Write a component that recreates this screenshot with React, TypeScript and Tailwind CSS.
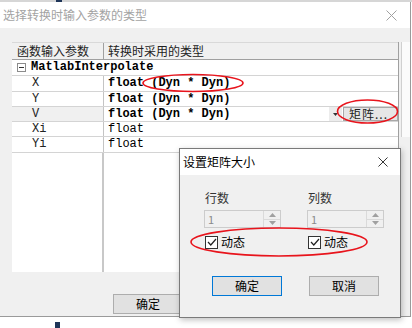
import React from 'react';

// shared font stacks
const cjk = "font-['Microsoft_YaHei','Noto_Sans_CJK_SC',sans-serif]";
const mono = "font-['Liberation_Mono','Noto_Sans_CJK_SC',monospace]";

type Row = { name: string; type: string; bold: boolean; h: string; combo?: boolean };

const ROWS: Row[] = [
  { name: 'X', type: 'float (Dyn * Dyn)', bold: true, h: 'h-[16px]' },
  { name: 'Y', type: 'float (Dyn * Dyn)', bold: true, h: 'h-[15px]' },
  { name: 'V', type: 'float (Dyn * Dyn)', bold: true, h: 'h-[15px]', combo: true },
  { name: 'Xi', type: 'float', bold: false, h: 'h-[15px]' },
  { name: 'Yi', type: 'float', bold: false, h: 'h-[16px]' },
];

const CloseX: React.FC<{ color: string; size?: number }> = ({ color, size = 11 }) => (
  <svg width={size} height={size} viewBox="0 0 11 11">
    <path d="M0.5 0.5 L10.5 10.5 M10.5 0.5 L0.5 10.5" stroke={color} strokeWidth="1" fill="none" />
  </svg>
);

const SpinBox: React.FC = () => (
  <div className="flex h-[18px] w-[77px] border border-[#cccccc] bg-[#f0f0f0]">
    <div className={`flex-1 pl-[3px] text-[11px] leading-[16px] text-[#8a8a8a] ${cjk}`}>1</div>
    <div className="flex w-[17px] flex-col border-l border-[#dadada]">
      <div className="flex flex-1 items-center justify-center border-b border-[#dadada]">
        <svg width="7" height="4" viewBox="0 0 7 4"><path d="M0 4 L3.5 0 L7 4 Z" fill="#a0a0a0" /></svg>
      </div>
      <div className="flex flex-1 items-center justify-center">
        <svg width="7" height="4" viewBox="0 0 7 4"><path d="M0 0 L3.5 4 L7 0 Z" fill="#a0a0a0" /></svg>
      </div>
    </div>
  </div>
);

const Check: React.FC<{ label: string }> = ({ label }) => (
  <div className="flex items-center gap-[3px]">
    <div className="flex h-[13px] w-[13px] items-center justify-center border border-[#333333] bg-white">
      <svg width="10" height="8" viewBox="0 0 10 8">
        <path d="M1 4 L3.8 7 L9 1" stroke="#222222" strokeWidth="1.2" fill="none" />
      </svg>
    </div>
    <span className={`text-[12px] leading-[14px] text-black ${cjk}`}>{label}</span>
  </div>
);

const MatrixDialog: React.FC = () => (
  <div className="absolute left-[179px] top-[148px] flex h-[170px] w-[222px] flex-col border border-[#7a7a7a] bg-[#f0f0f0] shadow-[1px_2px_6px_rgba(0,0,0,0.25)]">
    <div className="flex h-[26px] items-center justify-between bg-white pl-[3px] pr-[12px]">
      <span className={`text-[12px] text-black ${cjk}`}>设置矩阵大小</span>
      <CloseX color="#222222" size={10} />
    </div>
    <div className="flex flex-col pl-[24px] pt-[16px]">
      <div className="flex gap-[26px]">
        {['行数', '列数'].map((t) => (
          <div key={t} className="flex w-[77px] flex-col">
            <span className={`pl-[1px] text-[12px] leading-[14px] text-[#333333] ${cjk}`}>{t}</span>
            <div className="mt-[5px]">
              <SpinBox />
            </div>
            <div className="mt-[7px] pl-[1px]">
              <Check label="动态" />
            </div>
          </div>
        ))}
      </div>
      <div className="mt-[27px] flex gap-[27px] pl-[8px]">
        <button className={`h-[20px] w-[70px] border border-[#0078d7] bg-[#e1e1e1] text-[12px] text-black ${cjk}`}>确定</button>
        <button className={`h-[20px] w-[70px] border border-[#adadad] bg-[#e1e1e1] text-[12px] text-black ${cjk}`}>取消</button>
      </div>
    </div>
  </div>
);

const Annotations: React.FC = () => (
  <svg className="pointer-events-none absolute left-0 top-0" width="412" height="328" viewBox="0 0 412 328">
    <g stroke="#e8141c" strokeWidth="1.6" fill="none">
      <ellipse cx="193" cy="83" rx="50" ry="8.5" />
      <ellipse cx="367.5" cy="111.5" rx="30" ry="11.5" />
      <ellipse cx="279" cy="242" rx="88" ry="14" />
    </g>
  </svg>
);

const App: React.FC = () => {
  return (
    <div className="relative flex h-[328px] w-[412px] flex-col overflow-hidden bg-white">
      {/* strip of what lies behind the window */}
      <div className="flex h-[2px] bg-[#d6d6d6]">
        <div className="ml-[56px] w-[6px] bg-[#1e3558]" />
      </div>

      {/* main window */}
      <div className="flex h-[315px] w-[411px] flex-col border-r border-b border-[#9a9a9a]">
        <div className="flex h-[26px] items-center justify-between bg-white pl-[3px] pr-[13px]">
          <span className={`text-[12px] text-[#a3a3a3] ${cjk}`}>选择转换时输入参数的类型</span>
          <CloseX color="#a0a0a0" />
        </div>

        <div className="flex flex-1 flex-col bg-[#f0f0f0] pl-[12px] pt-[14px]">
          <div className="flex">
            {/* property grid */}
            <div className="flex h-[230px] w-[387px] flex-col border-r border-[#a0a0a0] bg-white">
              <div className={`flex h-[18px] border-t border-b border-t-[#d9d9d9] border-b-[#a0a0a0] bg-[#f0f0f0] text-[12px] leading-[16px] text-[#222222] ${cjk}`}>
                <div className="w-[92px] border-r border-[#a0a0a0] pl-[5px]">函数输入参数</div>
                <div className="flex-1 pl-[4px]">转换时采用的类型</div>
              </div>

              <div className="flex h-[16px] items-center border-b border-[#d4d4d4] pl-[5px]">
                <div className="flex h-[9px] w-[9px] items-center justify-center border border-[#8c8c8c] bg-white">
                  <div className="h-px w-[5px] bg-[#333333]" />
                </div>
                <span className={`ml-[5px] text-[12px] font-bold leading-[15px] text-black ${mono}`}>MatlabInterpolate</span>
              </div>

              {ROWS.map((r) => (
                <div key={r.name} className={`flex ${r.h} border-b border-[#d4d4d4]`}>
                  <div
                    className={`w-[92px] border-r border-[#c4c4c4] pl-[20px] text-[12px] leading-[14px] text-[#222222] ${mono} ${
                      r.combo ? 'bg-[#f0f0f0]' : 'bg-white'
                    }`}
                  >
                    {r.name}
                  </div>
                  <div className="flex flex-1 items-stretch">
                    <span
                      className={`flex-1 pl-[4px] text-[12px] leading-[14px] text-black ${mono} ${
                        r.bold ? 'font-bold' : 'font-normal'
                      }`}
                    >
                      {r.type}
                    </span>
                    {r.combo && (
                      <>
                        <div className="flex w-[13px] items-center justify-center bg-[#ececec]">
                          <svg width="5" height="3" viewBox="0 0 5 3"><path d="M0 0 L2.5 3 L5 0 Z" fill="#333333" /></svg>
                        </div>
                        <div className={`ml-[1px] flex w-[55px] items-center border border-[#a8a8a8] bg-[#e6e6e6] pl-[5px] text-[12px] tracking-[1px] text-[#222222] ${cjk}`}>
                          矩阵...
                        </div>
                      </>
                    )}
                  </div>
                </div>
              ))}

              <div className="flex flex-1">
                <div className="w-[92px] border-r-2 border-[#c8c8c8]" />
                <div className="flex-1" />
              </div>
            </div>
            <div className="ml-[2px] h-[95px] w-[9px] border-l border-[#d0d0d0] bg-[#fbfbfb]" />
          </div>

          <div className="mt-[19px] pl-[101px]">
            <button className={`h-[20px] w-[70px] border border-[#adadad] bg-[#e1e1e1] text-[12px] text-black ${cjk}`}>确定</button>
          </div>
        </div>
      </div>

      <div className="mt-[5px] flex flex-1">
        <div className="ml-[55px] w-[5px] bg-[#1e3558]" />
      </div>

      <MatrixDialog />
      <Annotations />
    </div>
  );
};

export default App;
